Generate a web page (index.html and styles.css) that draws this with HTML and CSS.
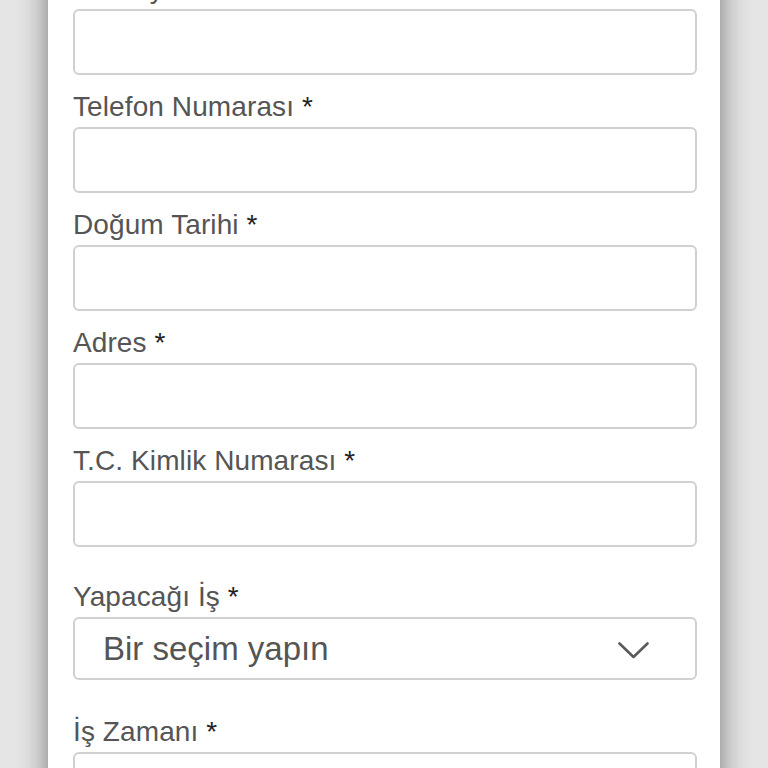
FILE: index.html
```html
<!DOCTYPE html>
<html lang="tr">
<head>
<meta charset="utf-8">
<title>Form</title>
<link rel="stylesheet" href="styles.css">
</head>
<body>
<div class="card">
  <form class="form">
    <div class="field">
      <label class="label">Ad Soyad <span class="req">*</span></label>
      <div class="input"></div>
    </div>
    <div class="field">
      <label class="label">Telefon Numarası <span class="req">*</span></label>
      <div class="input"></div>
    </div>
    <div class="field">
      <label class="label">Doğum Tarihi <span class="req">*</span></label>
      <div class="input"></div>
    </div>
    <div class="field">
      <label class="label">Adres <span class="req">*</span></label>
      <div class="input"></div>
    </div>
    <div class="field">
      <label class="label">T.C. Kimlik Numarası <span class="req">*</span></label>
      <div class="input"></div>
    </div>
    <div class="field field-select">
      <label class="label">Yapacağı İş <span class="req">*</span></label>
      <div class="select">
        <span class="select-text">Bir seçim yapın</span>
        <svg class="chevron" width="31" height="17" viewBox="0 0 31 17"><path d="M1.5 1.5 L15.5 15 L29.5 1.5" fill="none" stroke="#5a5a5a" stroke-width="2.6" stroke-linecap="round" stroke-linejoin="round"/></svg>
      </div>
    </div>
    <div class="field field-after-select">
      <label class="label">İş Zamanı <span class="req">*</span></label>
      <div class="input"></div>
    </div>
  </form>
</div>
</body>
</html>
```
FILE: styles.css
```css
html, body {
  margin: 0;
  padding: 0;
  height: 100%;
  overflow: hidden;
}
body {
  background: #e6e5e6;
  font-family: "Liberation Sans", Arial, Helvetica, sans-serif;
}
.card {
  margin: -43px 0 0 48px;
  width: 672px;
  background: #ffffff;
  box-shadow: 0 0 28px rgba(0, 0, 0, 0.48);
  padding: 0 23px 40px 25px;
  box-sizing: border-box;
}
.form {
  display: flex;
  flex-direction: column;
}
.field {
  display: flex;
  flex-direction: column;
  padding-top: 17px;
}
.label {
  display: block;
  font-size: 28px;
  line-height: 30px;
  letter-spacing: 0.1px;
  color: #555555;
  margin-bottom: 5px;
}
.req {
  color: #222222;
}
.input {
  height: 66px;
  border: 2px solid #d0d0d0;
  border-radius: 6px;
  box-sizing: border-box;
  background: #fff;
}
.field-select {
  padding-top: 35px;
}
.select {
  height: 63px;
  border: 2px solid #d0d0d0;
  border-radius: 6px;
  box-sizing: border-box;
  display: flex;
  align-items: center;
  justify-content: space-between;
  padding: 0 46px 0 28px;
}
.select-text {
  font-size: 33px;
  color: #555555;
}
.chevron {
  display: block;
  margin-top: 4px;
}
.field-after-select {
  padding-top: 37px;
}
```
